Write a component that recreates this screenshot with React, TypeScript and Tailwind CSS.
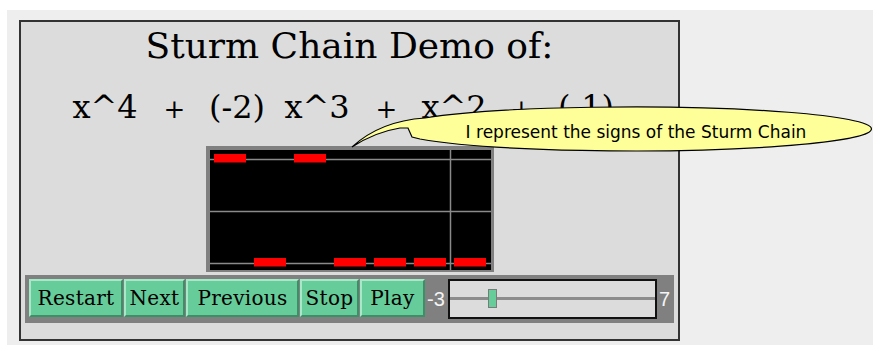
import React from "react";

const serif = "font-['DejaVu_Serif','Liberation_Serif',serif]";

const buttons = [
  { label: "Restart", w: "w-[94px]" },
  { label: "Next", w: "w-[61px]" },
  { label: "Previous", w: "w-[113px]" },
  { label: "Stop", w: "w-[59px]" },
  { label: "Play", w: "w-[65px]" },
];

// each column: true = positive (top row), false = negative (bottom row)
const signs = [true, false, true, false, false, false, false];

const SignChart = () => (
  <svg width="288" height="126" viewBox="0 0 288 126" className="block">
    <rect x="0" y="0" width="288" height="126" fill="#808080" />
    <rect x="4" y="4" width="281" height="120" fill="#000" />
    <line x1="4" y1="13.5" x2="285" y2="13.5" stroke="#8a8a8a" strokeWidth="1.5" />
    <line x1="4" y1="65.5" x2="285" y2="65.5" stroke="#8a8a8a" strokeWidth="1.5" />
    <line x1="4" y1="117.5" x2="285" y2="117.5" stroke="#8a8a8a" strokeWidth="1.5" />
    <line x1="244.5" y1="4" x2="244.5" y2="124" stroke="#8a8a8a" strokeWidth="1.5" />
    {signs.map((pos, i) => (
      <rect key={i} x={8 + i * 40} y={pos ? 8 : 112} width="32" height="8.5" fill="#ff0000" />
    ))}
  </svg>
);

const Bubble = () => (
  <div className="absolute left-[345px] top-[104px] w-[528px] h-[50px]">
    <svg width="528" height="50" viewBox="0 0 528 50" className="absolute inset-0">
      <path
        d="M 7 43 Q 35 17 80 14 A 239 22 0 1 1 75 35 L 67 33 L 63 24 L 55 24 Q 30 28 7 43 Z"
        fill="#ffff99"
        stroke="#000"
        strokeWidth="1.2"
      />
    </svg>
    <div className="absolute left-[50px] top-[20px] w-[482px] text-center text-[17px] leading-[17px] text-black font-['DejaVu_Sans',sans-serif] whitespace-nowrap">
      I represent the signs of the Sturm Chain
    </div>
  </div>
);

const tokens = [
  { t: "x^4", w: "w-[90px]", s: "text-[32px]" },
  { t: "+", w: "w-[49px]", s: "text-[26px]" },
  { t: "(-2)", w: "w-[76px]", s: "text-[32px]" },
  { t: "x^3", w: "w-[84px]", s: "text-[32px]" },
  { t: "+", w: "w-[55px]", s: "text-[26px]" },
  { t: "x^2", w: "w-[80px]", s: "text-[32px]" },
  { t: "+", w: "w-[55px]", s: "text-[26px]" },
  { t: "(-1)", w: "w-[74px]", s: "text-[32px]" },
];

export default function App() {
  return (
    <div className="relative w-[873px] h-[345px] bg-white overflow-hidden">
      <div className="ml-[7px] mt-[10px] h-[335px] bg-[#eeeeee] pl-[12px] pt-[10px]">
        <div className="w-[661px] h-[321px] border-2 border-[#333333] bg-[#dcdcdc] flex flex-col items-center">
          <div className={`${serif} mt-[6px] text-[36px] leading-[36px] text-black`}>Sturm Chain Demo of:</div>

          <div className={`${serif} self-start ml-[39px] mt-[27px] h-[32px] flex items-baseline leading-[32px] text-black`}>
            {tokens.map((k, i) => (
              <span key={i} className={`${k.w} ${k.s} text-center whitespace-nowrap`}>
                {k.t}
              </span>
            ))}
          </div>

          <div className="mt-[23px]">
            <SignChart />
          </div>

          <div className="mt-[3px] self-stretch mx-[4px] h-[48px] bg-[#808080] flex items-start pt-[4px] pl-[4px] gap-px">
            {buttons.map((b) => (
              <button
                key={b.label}
                className={`${b.w} h-[38px] bg-[#66cc99] border-t-2 border-l-2 border-b-2 border-r-2 border-t-[#a8e8c8] border-l-[#a8e8c8] border-b-[#3d8f68] border-r-[#3d8f68] flex items-center justify-center ${serif} text-[20px] leading-[20px] tracking-[0.3px] text-black`}
              >
                {b.label}
              </button>
            ))}
            <div className="flex items-center h-[40px]">
              <span className="w-[22px] pl-[1px] text-[20px] text-[#f4f4f4] font-['Liberation_Sans',sans-serif]">-3</span>
              <div className="relative w-[209px] h-[40px] border-2 border-[#111111] bg-[#dcdcdc]">
                <div className="absolute left-0 right-0 top-[16px] h-[3px] bg-[#8c8c8c]" />
                <div className="absolute left-[38px] top-[8px] w-[9px] h-[19px] bg-[#66cc99] border border-[#7a7a7a]" />
              </div>
              <span className="pl-[2px] text-[20px] text-[#f4f4f4] font-['Liberation_Sans',sans-serif]">7</span>
            </div>
          </div>
        </div>
      </div>
      <Bubble />
    </div>
  );
}
